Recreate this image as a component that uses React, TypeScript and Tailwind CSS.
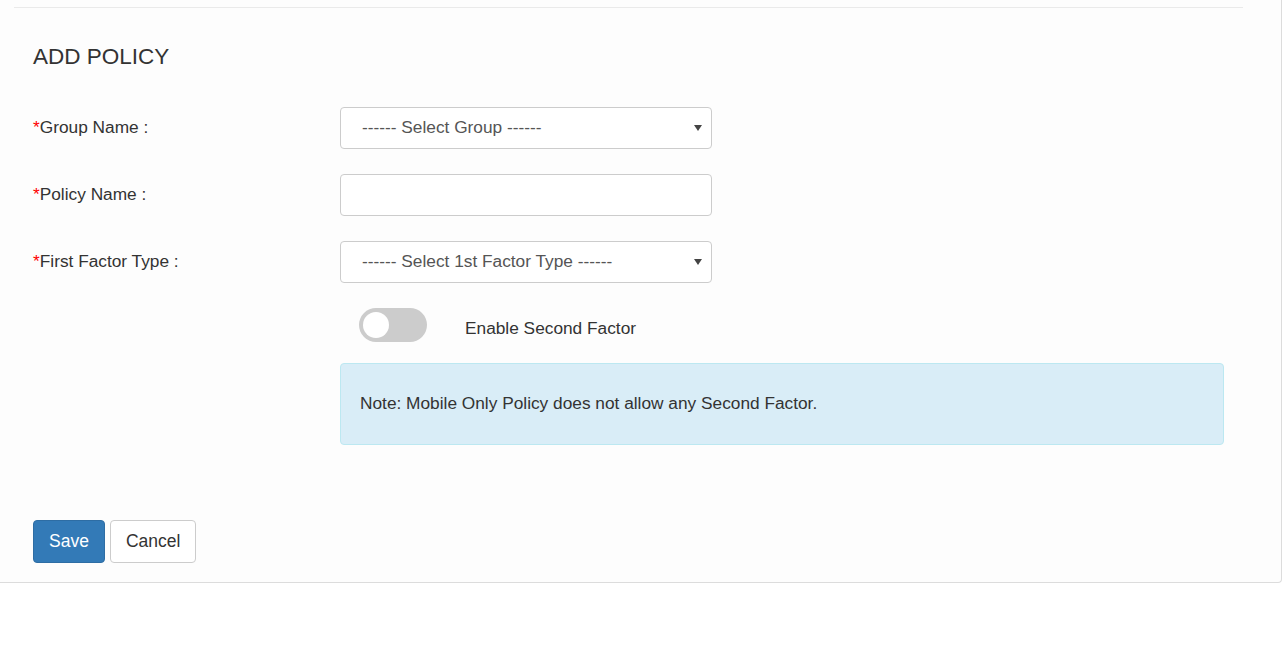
import React from 'react';

const font = { fontFamily: '"Liberation Sans", Arial, Helvetica, sans-serif' };

const Caret = () => (
  <svg className="w-[8px] h-[6px]" viewBox="0 0 8 6">
    <path d="M0 0 L8 0 L4 6 Z" fill="#444" />
  </svg>
);

interface RowProps {
  label: string;
  children: React.ReactNode;
}

const FormRow: React.FC<RowProps> = ({ label, children }) => (
  <div className="flex items-center h-[42px]">
    <label className="w-[307px] text-[17.3px] text-[#333]">
      <span className="text-[#ff0000]">*</span>
      {label}
    </label>
    {children}
  </div>
);

const SelectBox: React.FC<{ text: string }> = ({ text }) => (
  <div className="w-[372px] h-[42px] border border-[#ccc] rounded-[4px] bg-white flex items-center justify-between pl-[21px] pr-[9px] text-[17.3px] text-[#555]">
    <span>{text}</span>
    <Caret />
  </div>
);

export default function App() {
  return (
    <div className="w-[1283px] h-[648px] bg-white" style={font}>
      <div className="w-[1282px] bg-[#fdfdfd] border-r border-b border-[#dcdcdc] rounded-br-[4px] pt-[7px] pb-[19px]">
        <div className="ml-[14px] w-[1229px] border-t border-[#eaeaea]" />

        <div className="pl-[33px]">
          <h3 className="mt-[36px] text-[22.5px] leading-[26px] text-[#333]">ADD POLICY</h3>

          <div className="mt-[37px] flex flex-col gap-[25px]">
            <FormRow label="Group Name :">
              <SelectBox text="------ Select Group ------" />
            </FormRow>
            <FormRow label="Policy Name :">
              <div className="w-[372px] h-[42px] border border-[#ccc] rounded-[4px] bg-white" />
            </FormRow>
            <FormRow label="First Factor Type :">
              <SelectBox text="------ Select 1st Factor Type ------" />
            </FormRow>
          </div>

          <div className="mt-[25px] ml-[326px] flex items-center h-[34px]">
            <div className="w-[68px] h-[34px] rounded-full bg-[#cccccc] flex items-center pl-[4px]">
              <div className="w-[26px] h-[26px] rounded-full bg-white" />
            </div>
            <span className="ml-[38px] pt-[7px] text-[17.3px] text-[#333]">Enable Second Factor</span>
          </div>

          <div className="mt-[21px] ml-[307px] w-[884px] h-[82px] bg-[#d9edf7] border border-[#bce8f1] rounded-[4px] flex items-center pl-[19px] text-[17.3px] text-[#333]">
            Note: Mobile Only Policy does not allow any Second Factor.
          </div>

          <div className="mt-[75px] flex gap-[5px]">
            <button className="h-[43px] px-[15px] bg-[#337ab7] border border-[#2e6da4] rounded-[4px] text-white text-[17.5px]">
              Save
            </button>
            <button className="h-[43px] px-[15px] bg-white border border-[#ccc] rounded-[4px] text-[#333] text-[17.5px]">
              Cancel
            </button>
          </div>
        </div>
      </div>
    </div>
  );
}
